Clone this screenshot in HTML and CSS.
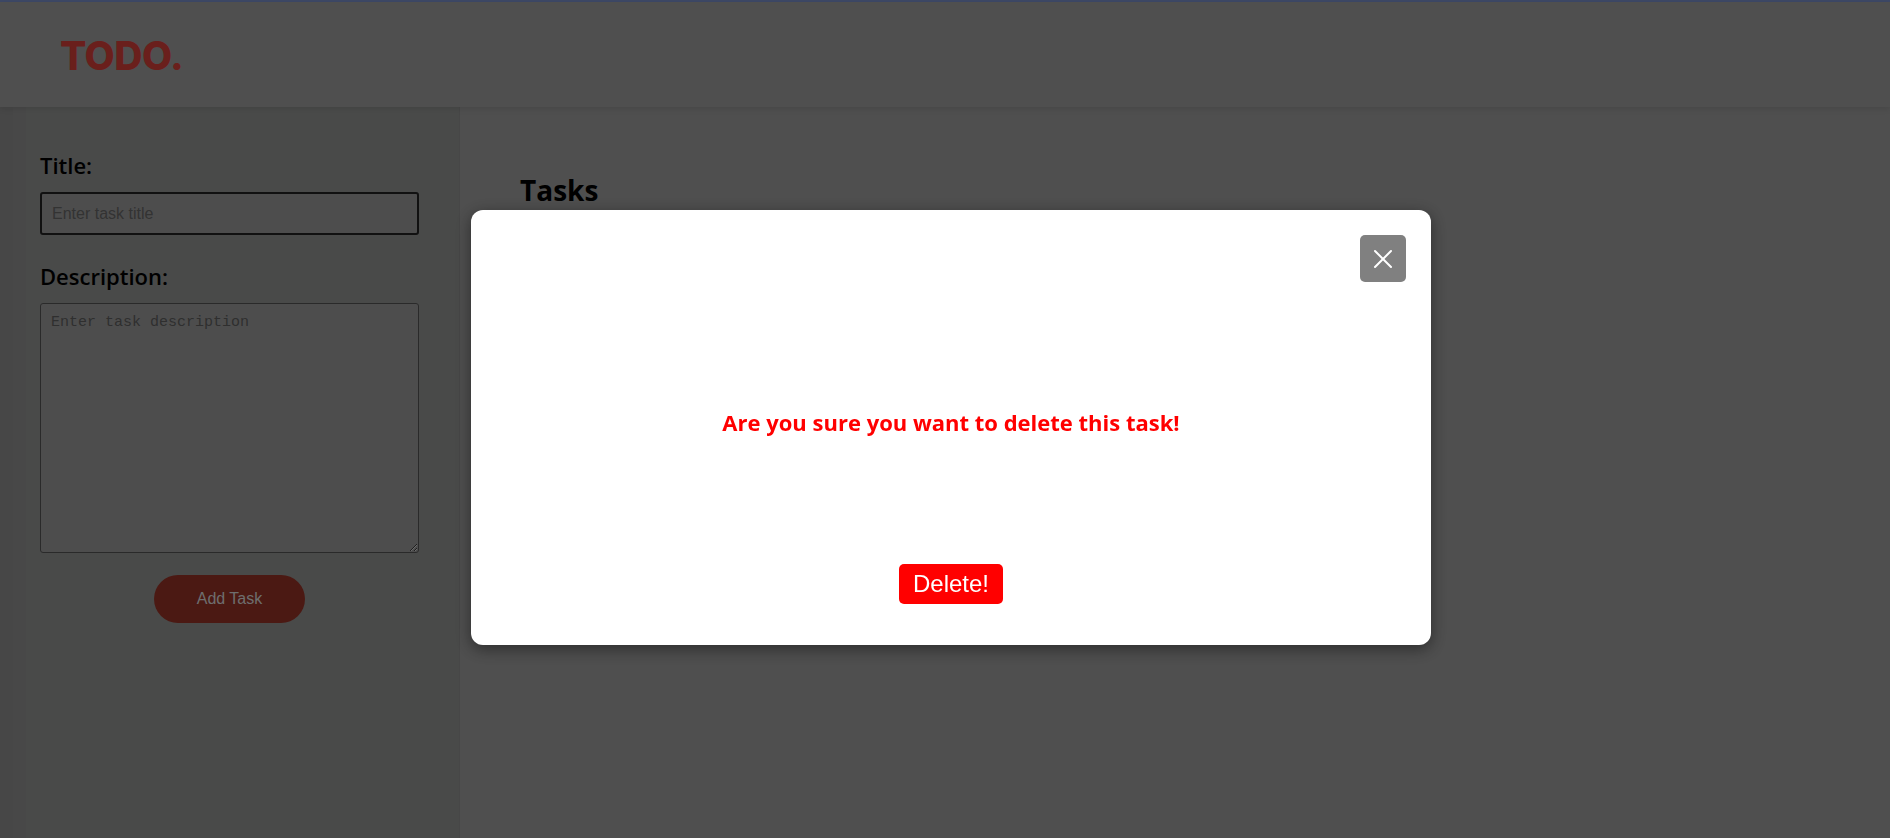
FILE: index.html
```html
<!DOCTYPE html>
<html lang="en">
<head>
<meta charset="utf-8">
<title>TODO.</title>
<link rel="stylesheet" href="styles.css">
</head>
<body>
<div class="app">
  <header class="topbar">
    <span class="logo">TODO.</span>
  </header>
  <div class="layout">
    <aside class="sidebar">
      <form class="task-form">
        <label class="field-label" for="title">Title:</label>
        <input class="title-input" id="title" type="text" placeholder="Enter task title">
        <label class="field-label" for="desc">Description:</label>
        <textarea class="desc-input" id="desc" placeholder="Enter task description"></textarea>
        <div class="form-actions">
          <button type="button" class="add-btn">Add Task</button>
        </div>
      </form>
    </aside>
    <main class="content">
      <h2 class="tasks-title">Tasks</h2>
    </main>
  </div>
</div>
<div class="backdrop"></div>
<div class="modal">
  <button type="button" class="close-btn" aria-label="Close">
    <svg width="20" height="20" viewBox="0 0 20 20"><path d="M2 2 L18 18 M18 2 L2 18" stroke="#fff" stroke-width="2" stroke-linecap="round" fill="none"/></svg>
  </button>
  <p class="modal-msg">Are you sure you want to delete this task!</p>
  <button type="button" class="delete-btn">Delete!</button>
</div>
</body>
</html>
```
FILE: styles.css
```css
* { box-sizing: border-box; }
html, body { margin: 0; padding: 0; height: 100%; }
body {
  font-family: "Open Sans", "Noto Sans", sans-serif;
  background: #9e9e9e;
  overflow: hidden;
}
.app {
  height: 100vh;
  display: flex;
  flex-direction: column;
  border-top: 2px solid #7a90cc;
}
.topbar {
  height: 105px;
  flex: none;
  background: #9e9e9e;
  display: flex;
  align-items: center;
  padding-left: 60px;
  box-shadow: 0 2px 6px rgba(0,0,0,0.1);
  position: relative;
  z-index: 1;
}
.logo {
  font-family: Inter, "Liberation Sans", sans-serif;
  font-weight: 800;
  font-size: 39px;
  color: #d43e38;
  letter-spacing: -0.5px;
  margin-top: 2px;
}
.layout {
  flex: 1;
  display: flex;
}
.sidebar {
  width: 460px;
  flex: none;
  background: #939593;
  border-right: 1px solid #8e8e8e;
  box-shadow: inset 13px 0 0 #8e8e8e, inset 26px 0 0 #919191;
  padding: 43px 40px 0 40px;
}
.task-form {
  display: flex;
  flex-direction: column;
}
.field-label {
  font-weight: 600;
  font-size: 22px;
  color: #000;
  line-height: 30px;
  margin-bottom: 12px;
}
.title-input {
  width: 379px;
  height: 43px;
  border: 2px solid #222;
  border-radius: 3px;
  background: #9b9b9b;
  font-family: "Liberation Sans", Arial, sans-serif;
  font-size: 16px;
  padding: 0 10px;
  margin-bottom: 26px;
  outline: none;
}
.title-input::placeholder { color: #666; }
.desc-input {
  width: 379px;
  height: 250px;
  border: 1px solid #555;
  border-radius: 3px;
  background: #9b9b9b;
  font-family: "Liberation Mono", monospace;
  font-size: 15px;
  padding: 10px;
  resize: vertical;
}
.desc-input::placeholder { color: #5e5e5e; }
.form-actions {
  display: flex;
  justify-content: center;
  margin-top: 22px;
}
.add-btn {
  width: 151px;
  height: 48px;
  border: none;
  border-radius: 24px;
  background: #963226;
  color: #dcdcdc;
  font-family: "Liberation Sans", Arial, sans-serif;
  font-size: 16px;
}
.content {
  flex: 1;
  padding: 64px 60px;
  background: #9e9e9e;
}
.tasks-title {
  margin: 0;
  font-weight: 700;
  font-size: 28px;
  color: #000;
}
.backdrop {
  position: fixed;
  inset: 0;
  z-index: 10;
  background: rgba(0,0,0,0.5);
}
.modal {
  position: fixed;
  z-index: 11;
  left: 471px;
  top: 210px;
  width: 960px;
  height: 435px;
  background: #fff;
  border-radius: 12px;
  box-shadow: 0 4px 16px rgba(0,0,0,0.45);
  display: flex;
  flex-direction: column;
  align-items: center;
}
.close-btn {
  position: absolute;
  top: 25px;
  right: 25px;
  width: 46px;
  height: 47px;
  border: none;
  border-radius: 5px;
  background: #808080;
  display: flex;
  align-items: center;
  justify-content: center;
  padding: 0;
}
.modal-msg {
  margin: 198px 0 0 0;
  color: #ff0000;
  font-weight: 700;
  font-size: 22px;
  line-height: 28px;
}
.delete-btn {
  margin-top: 128px;
  height: 40px;
  padding: 0 14px;
  border: none;
  border-radius: 5px;
  background: #ff0000;
  color: #fff;
  font-family: "Liberation Sans", Arial, sans-serif;
  font-size: 24px;
}
```
